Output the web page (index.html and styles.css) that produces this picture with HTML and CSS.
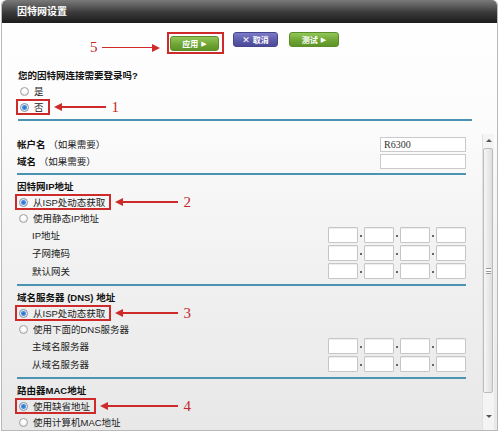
FILE: index.html
```html
<!DOCTYPE html>
<html lang="zh-CN">
<head>
    <meta charset="UTF-8">
    <meta name="viewport" content="width=device-width, initial-scale=1.0">
    <title>因特网设置</title>
    <link rel="stylesheet" href="styles.css">
</head>
<body>
    <div class="window">
        <div class="titlebar">因特网设置</div>

        <div class="toolbar">
            <div class="callout callout-btn">
                <span class="num">5</span>
                <span class="arrow arrow-right"></span>
            </div>
            <span class="mark mark-btn"><button type="button" class="btn btn-green btn-apply">应用 <i>&#9654;</i></button></span>
            <button type="button" class="btn btn-purple btn-cancel"><b>&#10005;</b>取消</button>
            <button type="button" class="btn btn-green btn-test">测试 <i>&#9654;</i></button>
        </div>

        <div class="login">
            <div class="heading">您的因特网连接需要登录吗?</div>
            <div class="option"><label class="choice"><span class="radio"></span>是</label></div>
            <div class="option w-short">
                <label class="choice mark"><span class="radio on"></span>否</label>
                <div class="callout"><span class="arrow"></span><span class="num">1</span></div>
            </div>
        </div>

        <div class="scroll">
            <div class="content">
                <div class="section sec-account">
                    <div class="field">
                        <span><b>帐户名</b> （如果需要）</span>
                        <input type="text" class="text" value="R6300">
                    </div>
                    <div class="field">
                        <span><b>域名</b> （如果需要）</span>
                        <input type="text" class="text">
                    </div>
                </div>

                <div class="section">
                    <div class="heading">因特网IP地址</div>
                    <div class="option w-long">
                        <label class="choice mark"><span class="radio on"></span>从ISP处动态获取</label>
                        <div class="callout"><span class="arrow"></span><span class="num">2</span></div>
                    </div>
                    <div class="option"><label class="choice"><span class="radio"></span>使用静态IP地址</label></div>
                    <div class="ip-rows">
                        <div class="field"><span class="sub">IP地址</span>
                            <div class="ip"><span class="box"></span><span class="dot"></span><span class="box"></span><span class="dot"></span><span class="box"></span><span class="dot"></span><span class="box"></span></div>
                        </div>
                        <div class="field"><span class="sub">子网掩码</span>
                            <div class="ip"><span class="box"></span><span class="dot"></span><span class="box"></span><span class="dot"></span><span class="box"></span><span class="dot"></span><span class="box"></span></div>
                        </div>
                        <div class="field"><span class="sub">默认网关</span>
                            <div class="ip"><span class="box"></span><span class="dot"></span><span class="box"></span><span class="dot"></span><span class="box"></span><span class="dot"></span><span class="box"></span></div>
                        </div>
                    </div>
                </div>

                <div class="section">
                    <div class="heading">域名服务器 (DNS) 地址</div>
                    <div class="option w-long">
                        <label class="choice mark"><span class="radio on"></span>从ISP处动态获取</label>
                        <div class="callout"><span class="arrow"></span><span class="num">3</span></div>
                    </div>
                    <div class="option"><label class="choice"><span class="radio"></span>使用下面的DNS服务器</label></div>
                    <div class="ip-rows">
                        <div class="field"><span class="sub">主域名服务器</span>
                            <div class="ip"><span class="box"></span><span class="dot"></span><span class="box"></span><span class="dot"></span><span class="box"></span><span class="dot"></span><span class="box"></span></div>
                        </div>
                        <div class="field"><span class="sub">从域名服务器</span>
                            <div class="ip"><span class="box"></span><span class="dot"></span><span class="box"></span><span class="dot"></span><span class="box"></span><span class="dot"></span><span class="box"></span></div>
                        </div>
                    </div>
                </div>

                <div class="section sec-last">
                    <div class="heading">路由器MAC地址</div>
                    <div class="option w-long">
                        <label class="choice mark"><span class="radio on"></span>使用缺省地址</label>
                        <div class="callout"><span class="arrow"></span><span class="num">4</span></div>
                    </div>
                    <div class="option"><label class="choice"><span class="radio"></span>使用计算机MAC地址</label></div>
                    <div class="field"><span class="sub"></span><input type="text" class="text text-mac"></div>
                </div>
            </div>

            <div class="scrollbar">
                <span class="sb-btn sb-up"></span>
                <span class="sb-thumb"><i></i></span>
                <span class="sb-space"></span>
                <span class="sb-btn sb-down"></span>
            </div>
        </div>
    </div>
</body>
</html>
```

FILE: styles.css
```css
*{
    margin: 0;
    padding: 0;
    box-sizing: border-box;
}
body{
    background: #fff;
    font-family: "Liberation Sans", "Noto Sans CJK SC", sans-serif;
    font-size: 9.5px;
    color: #222;
}
.window{
    margin-left: 1px;
    width: 497px;
    height: 431px;
    border: 1px solid #b9b9b9;
    border-top: none;
    border-radius: 5px 5px 0 0;
    overflow: hidden;
    display: flex;
    flex-direction: column;
    background: linear-gradient(#fff 0, #fcfcfc 120px, #f2f2f2 250px, #e8e8e8 100%);
}
.titlebar{
    height: 23px;
    line-height: 23px;
    padding-left: 15px;
    border-radius: 5px 5px 0 0;
    background: linear-gradient(#7a7a7a, #3a3a3a 55%, #1c1c1c);
    color: #fff;
    font-weight: bold;
    font-size: 10px;
}

/* top buttons */
.toolbar{
    height: 34px;
    flex: none;
    display: flex;
    align-items: flex-start;
    padding: 9px 0 0 88px;
}
.btn{
    height: 15px;
    border: 1px solid;
    border-radius: 3px;
    color: #fff;
    font-family: inherit;
    font-size: 8px;
    font-weight: bold;
    display: flex;
    align-items: center;
    justify-content: center;
    gap: 3px;
}
.btn i{
    font-style: normal;
    font-family: "DejaVu Sans", sans-serif;
    font-size: 7px;
}
.btn b{
    font-family: "DejaVu Sans", sans-serif;
    font-size: 9px;
}
.btn-green{
    background: linear-gradient(#93c65a, #6da332 60%, #5d9426);
    border-color: #5b8d2a;
}
.btn-purple{
    background: linear-gradient(#7b7bc8, #5a59a8 60%, #4b4a98);
    border-color: #46458d;
}
.btn-apply{ width: 49px; }
.btn-cancel{ width: 45px; margin-left: 9px; }
.btn-test{ width: 50px; margin-left: 11px; }

/* red annotations */
.mark{
    border: 2px solid #cf2a2a;
}
.mark-btn{
    display: flex;
    padding: 2px 3px 1px 1px;
}
.callout{
    flex: 1;
    display: flex;
    align-items: center;
    margin-left: 4px;
}
.callout-btn{
    flex: none;
    width: 70px;
    margin: 8px 7px 0 0;
}
.num{
    font-family: "Liberation Serif", serif;
    font-size: 15px;
    line-height: 15px;
    color: #c4282a;
    margin-left: 6px;
}
.callout-btn .num{ margin: 0 4px 0 0; }
.arrow{
    flex: 1;
    display: flex;
    align-items: center;
}
.arrow::before{
    content: "";
    border-top: 4px solid transparent;
    border-bottom: 4px solid transparent;
    border-right: 8px solid #cf2a2a;
}
.arrow::after{
    content: "";
    flex: 1;
    height: 1.5px;
    background: #cf2a2a;
}
.arrow-right{ flex-direction: row-reverse; }
.arrow-right::before{
    border-right: 0;
    border-left: 8px solid #cf2a2a;
}

/* form rows */
.login{
    flex: none;
    margin: 0 25px 0 16px;
    padding: 12px 0 4px;
    border-bottom: 2px solid #4a93b3;
}
.heading{
    height: 14px;
    line-height: 14px;
    font-weight: bold;
    color: #111;
}
.option{
    height: 16px;
    display: flex;
    align-items: center;
}
.w-short{ width: 101px; }
.w-long{ width: 174px; }
.choice{
    height: 16px;
    margin-left: -2px;
    padding: 0 4px 0 2px;
    border: 2px solid transparent;
    display: flex;
    align-items: center;
    gap: 5px;
    white-space: nowrap;
}
.choice.mark{ border-color: #cf2a2a; }
.radio{
    width: 9px;
    height: 9px;
    border-radius: 50%;
    border: 1px solid #a2a2a2;
    background: radial-gradient(circle at 50% 40%, #fff 30%, #d8d8d8);
}
.radio.on{
    border-color: #7f8fa3;
    background: radial-gradient(circle, #2d6fc4 0, #4a8ee0 2px, #e8eef6 3px, #fff 100%);
}

.scroll{
    flex: 1;
    min-height: 0;
    display: flex;
}
.content{
    flex: 1;
    padding: 0 16px 0 15px;
}
.section{
    padding: 5px 0;
    border-bottom: 2px solid #4a93b3;
}
.sec-account{ padding: 15px 0 4px; }
.sec-last{ border-bottom: none; }
.field{
    height: 16px;
    display: flex;
    align-items: center;
    justify-content: space-between;
    white-space: nowrap;
}
.sec-account .field + .field{ margin-top: 1px; }
.field b{ color: #111; }
.text{
    width: 86px;
    height: 15px;
    border: 1px solid #cacaca;
    background: #fff;
    padding-left: 3px;
    font-family: "Liberation Serif", serif;
    font-size: 10px;
    color: #333;
}
.text-mac{ width: 104px; }
.sub{ padding-left: 15px; }
.ip-rows{
    margin-top: 1px;
    display: flex;
    flex-direction: column;
    gap: 2px;
}
.ip{
    display: flex;
    align-items: center;
}
.box{
    width: 30px;
    height: 16px;
    border: 1px solid #c6c6c6;
    border-radius: 1px;
    background: #fff;
    box-shadow: inset 0 1px 1px #eee;
}
.dot{
    width: 6px;
    display: flex;
    justify-content: center;
    padding-top: 2px;
}
.dot::before{
    content: "";
    width: 2px;
    height: 2px;
    background: #666;
}

/* fake scrollbar */
.scrollbar{
    flex: none;
    width: 12px;
    margin: 13px 3px 0 0;
    display: flex;
    flex-direction: column;
    background: #f4f4f4;
    border-left: 1px solid #e2e2e2;
}
.sb-btn{
    height: 12px;
    display: flex;
    align-items: center;
    justify-content: center;
}
.sb-btn::before{
    content: "";
    border-left: 3px solid transparent;
    border-right: 3px solid transparent;
}
.sb-up::before{ border-bottom: 3px solid #555; }
.sb-down::before{ border-top: 3px solid #555; }
.sb-thumb{
    height: 245px;
    margin: 2px 1px 0 0;
    border: 1px solid #bcbcbc;
    border-radius: 2px;
    background: linear-gradient(90deg, #f6f6f6, #dedede);
    display: flex;
    align-items: center;
    justify-content: center;
}
.sb-thumb i{
    width: 5px;
    height: 6px;
    border-top: 1px solid #999;
    border-bottom: 1px solid #999;
    background: linear-gradient(#fff 0 2px, #999 2px 3px, #fff 3px);
}
.sb-space{ flex: 1; }
.sb-down{ margin-bottom: 8px; }
```
